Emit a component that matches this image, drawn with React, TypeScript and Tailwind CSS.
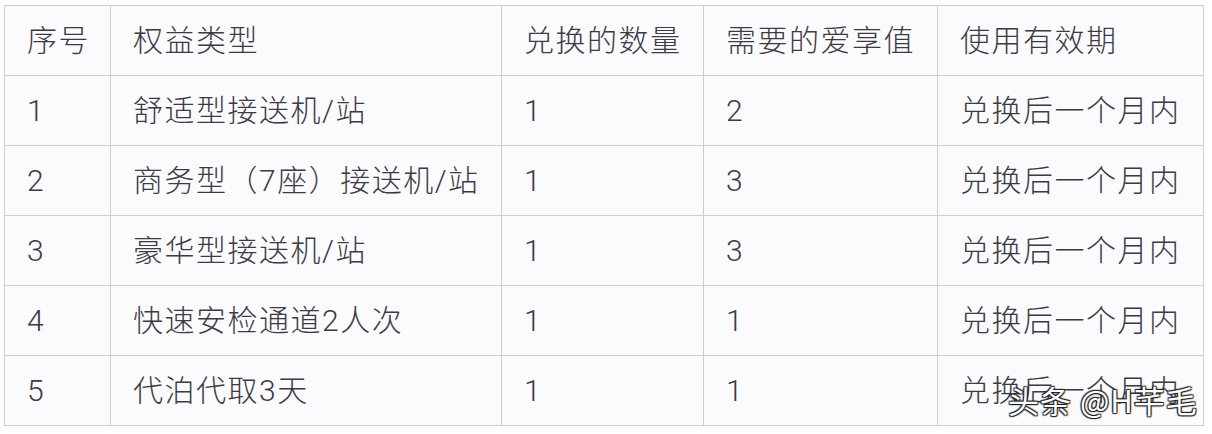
const headers = ["序号", "权益类型", "兑换的数量", "需要的爱享值", "使用有效期"];

const rows = [
  ["1", "舒适型接送机/站", "1", "2", "兑换后一个月内"],
  ["2", "商务型（7座）接送机/站", "1", "3", "兑换后一个月内"],
  ["3", "豪华型接送机/站", "1", "3", "兑换后一个月内"],
  ["4", "快速安检通道2人次", "1", "1", "兑换后一个月内"],
  ["5", "代泊代取3天", "1", "1", "兑换后一个月内"],
];

const widths = ["w-[106px]", "w-[391px]", "w-[202px]", "w-[234px]", "w-[266px]"];

const App = () => {
  return (
    <div className="relative w-[1212px] h-[434px] bg-white pt-[5px] pl-[4px]">
      <table
        className="table-fixed border-collapse bg-[#fbfafc] text-[#3c3a44] text-[30px] leading-none"
        style={{ fontFamily: 'Roboto, "Noto Sans CJK SC", sans-serif' }}
      >
        <thead>
          <tr className="h-[70px]">
            {headers.map((h, i) => (
              <th
                key={h}
                className={`${widths[i]} border border-[#cfcdd4] pl-[22px] text-left font-light tracking-[1.5px]`}
              >
                {h}
              </th>
            ))}
          </tr>
        </thead>
        <tbody>
          {rows.map((r) => (
            <tr key={r[0]} className="h-[70px]">
              {r.map((c, i) => (
                <td key={i} className="border border-[#cfcdd4] pl-[22px] font-light tracking-[1.5px] whitespace-nowrap">
                  {c}
                </td>
              ))}
            </tr>
          ))}
        </tbody>
      </table>
      <div
        className="absolute left-[1008px] top-[384px] text-[31px] leading-none tracking-[1px] text-white whitespace-nowrap"
        style={{
          fontFamily: '"Noto Sans CJK SC", sans-serif',
          textShadow: "1px 1px 1px #222, -1px -1px 1px #222, 1px -1px 1px #222, -1px 1px 1px #222",
        }}
      >
        头条 @H芊毛
      </div>
    </div>
  );
};

export default App;
